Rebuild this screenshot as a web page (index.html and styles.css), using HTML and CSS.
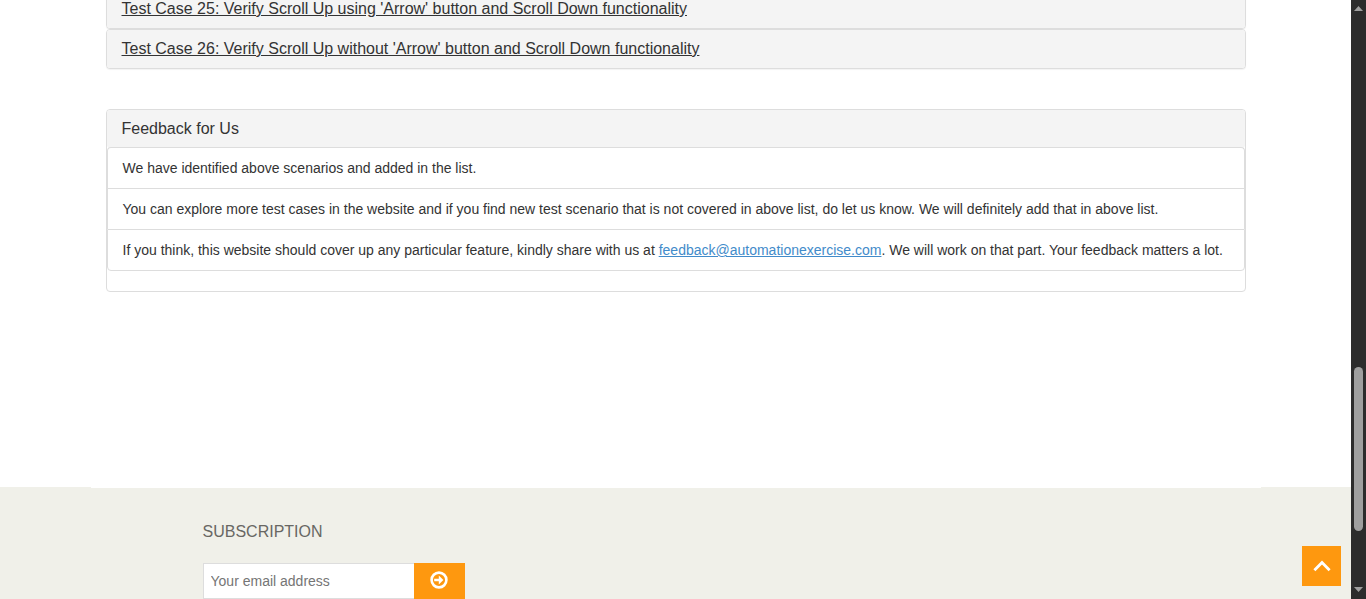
FILE: index.html
```html
<!DOCTYPE html>
<html lang="en">
<head>
<meta charset="utf-8">
<title>Test Cases</title>
<link rel="stylesheet" href="styles.css">
</head>
<body>
<div class="window">
  <div class="page">
    <main class="container content">
      <section class="panel case-panel">
        <h4 class="panel-title"><a class="case-link" href="#case25"><u>Test Case 25: Verify Scroll Up using 'Arrow' button and Scroll Down functionality</u></a></h4>
      </section>
      <section class="panel case-panel">
        <h4 class="panel-title"><a class="case-link" href="#case26"><u>Test Case 26: Verify Scroll Up without 'Arrow' button and Scroll Down functionality</u></a></h4>
      </section>
      <section class="panel feedback">
        <h4 class="panel-title">Feedback for Us</h4>
        <ul class="list">
          <li class="item">We have identified above scenarios and added in the list.</li>
          <li class="item">You can explore more test cases in the website and if you find new test scenario that is not covered in above list, do let us know. We will definitely add that in above list.</li>
          <li class="item">If you think, this website should cover up any particular feature, kindly share with us at <a class="mail" href="mailto:feedback@automationexercise.com">feedback@automationexercise.com</a>. We will work on that part. Your feedback matters a lot.</li>
        </ul>
      </section>
    </main>
    <footer class="footer">
      <div class="container footer-inner">
        <h2 class="footer-title"><label for="email">SUBSCRIPTION</label></h2>
        <form class="subscribe">
          <input class="email" id="email" type="email" placeholder="Your email address">
          <button class="submit" type="submit" aria-label="Subscribe">
            <svg width="18" height="18" viewBox="0 0 18 18" aria-hidden="true">
              <circle cx="9" cy="9" r="7.4" fill="none" stroke="#fff" stroke-width="2.6"/>
              <path d="M4.2 7.7h4.6V4.5L13.4 9l-4.6 4.5v-3.2H4.2z" fill="#fff"/>
            </svg>
          </button>
        </form>
      </div>
    </footer>
  </div>
  <div class="scrollbar" aria-hidden="true">
    <svg width="9" height="5" viewBox="0 0 9 5"><path d="M0 5L4.5 0L9 5z" fill="#9f9f9f"/></svg>
    <div class="track"><div class="thumb"></div></div>
    <svg width="9" height="5" viewBox="0 0 9 5"><path d="M0 0L4.5 5L9 0z" fill="#9f9f9f"/></svg>
  </div>
  <a class="to-top" href="#top" aria-label="Scroll to top">
    <svg width="18" height="12" viewBox="0 0 18 12" aria-hidden="true"><path d="M1.4 10.2L9 2.4l7.6 7.8" fill="none" stroke="#fff" stroke-width="2.8"/></svg>
  </a>
</div>
</body>
</html>
```

FILE: styles.css
```css
* { box-sizing: border-box; }

body {
  margin: 0;
  background: #fff;
  color: #333;
  font: 14px/20px "Liberation Sans", Arial, sans-serif;
}

.window {
  position: relative;
  display: flex;
  height: 100vh;
  overflow: hidden;
}

.page {
  display: flex;
  flex: 1;
  flex-direction: column;
  min-width: 0;
}

.container {
  width: 100%;
  max-width: 1170px;
  margin: 0 auto;
  padding: 0 15px;
}

.content {
  position: relative;
  z-index: 1;
  flex: none;
  margin-top: -11px;
  padding-bottom: 196px;
  background: #fff;
}

.panel {
  border: 1px solid #ddd;
  border-radius: 4px;
  background: #fff;
  box-shadow: 0 1px 1px rgba(0, 0, 0, 0.05);
}

.panel-title {
  margin: 0;
  padding: 10px 15px;
  border-radius: 3px;
  background: #f4f4f4;
  color: #333;
  font-size: 16px;
  font-weight: 400;
  line-height: 18px;
}

.case-link { color: inherit; text-decoration: none; }

.feedback {
  margin-top: 40px;
  padding-bottom: 20px;
  box-shadow: none;
}

.list {
  margin: -1px 0 0;
  padding: 0;
  list-style: none;
}

.item {
  padding: 10px 15px;
  border: 1px solid #ddd;
  border-bottom-width: 0;
  background: #fff;
}

.item:first-child { border-radius: 4px 4px 0 0; }

.item:last-child {
  border-bottom-width: 1px;
  border-radius: 0 0 4px 4px;
}

.mail { color: #428bca; text-decoration: underline; }

.footer {
  flex: 1 0 auto;
  margin-top: -1px;
  background: #f0f0e9;
}

.footer-inner { padding: 35px 15px 0 112px; }

.footer-title {
  margin: 0 0 22px;
  color: #686763;
  font-size: 16px;
  font-weight: 400;
  line-height: 19px;
}

.subscribe { display: flex; }

.email {
  width: 212px;
  height: 36px;
  padding: 0 7px;
  border: 1px solid #ddd;
  border-radius: 0;
  background: #fff;
  color: #333;
  font: inherit;
}

.email::placeholder { color: #757575; }

.submit {
  display: flex;
  align-items: center;
  justify-content: center;
  width: 51px;
  height: 36px;
  margin-left: -1px;
  padding: 0 0 2px;
  border: 0;
  background: #fe980f;
}

.scrollbar {
  display: flex;
  flex: none;
  flex-direction: column;
  align-items: center;
  width: 15px;
  padding: 6px 0 7px;
  background: #2c2c2c;
}

.track { flex: 1; }

.thumb {
  width: 9px;
  height: 164px;
  margin-top: 356px;
  border-radius: 5px;
  background: #9f9f9f;
}

.to-top {
  position: absolute;
  right: 25px;
  bottom: 13px;
  z-index: 2;
  display: flex;
  align-items: center;
  justify-content: center;
  width: 39px;
  height: 40px;
  background: #fe980f;
}
```
